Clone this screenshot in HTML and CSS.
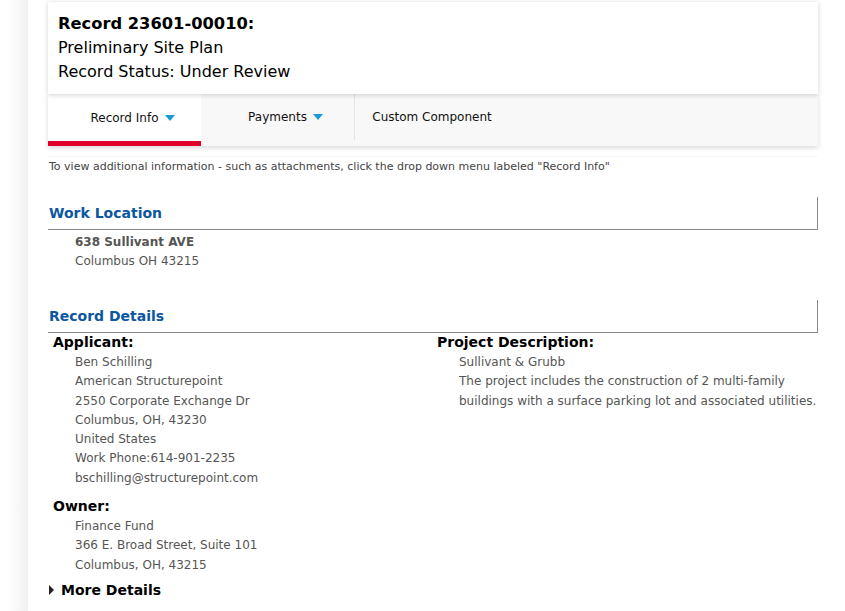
FILE: index.html
```html
<!DOCTYPE html>
<html>
<head>
  <title>Record 23601-00010</title>
  <meta charset="UTF-8">
  <link rel="stylesheet" href="styles.css">
</head>
<body>
  <div class="page">
    <div class="side-shade"></div>
    <div class="main">
      <div class="record-header">
        <div class="record-title">Record 23601-00010:</div>
        <div class="record-line">Preliminary Site Plan</div>
        <div class="record-line">Record Status: Under Review</div>
      </div>
      <div class="tabs">
        <div class="tab active">Record Info <span class="caret"></span></div>
        <div class="tab">Payments <span class="caret"></span></div>
        <div class="tab">Custom Component</div>
      </div>

      <div class="content">
        <div class="hint">To view additional information - such as attachments, click the drop down menu labeled "Record Info"</div>

        <div class="section-title">Work Location</div>
        <div class="address">
          <div class="strong">638 Sullivant AVE</div>
          <div>Columbus OH 43215</div>
        </div>

        <div class="section-title second">Record Details</div>
        <div class="details">
          <div class="col">
            <div class="label">Applicant:</div>
            <div class="values">
              <div>Ben Schilling</div>
              <div>American Structurepoint</div>
              <div>2550 Corporate Exchange Dr</div>
              <div>Columbus, OH, 43230</div>
              <div>United States</div>
              <div>Work Phone:614-901-2235</div>
              <div>bschilling@structurepoint.com</div>
            </div>
            <div class="label owner">Owner:</div>
            <div class="values">
              <div>Finance Fund</div>
              <div>366 E. Broad Street, Suite 101</div>
              <div>Columbus, OH, 43215</div>
            </div>
          </div>
          <div class="col">
            <div class="label">Project Description:</div>
            <div class="values">
              <div>Sullivant &amp; Grubb</div>
              <div>The project includes the construction of 2 multi-family buildings with a surface parking lot and associated utilities.</div>
            </div>
          </div>
        </div>

        <div class="more"><span class="arrow"></span>More Details</div>
      </div>
    </div>
  </div>
</body>
</html>
```

FILE: styles.css
```css
body {
  margin: 0;
  background: #fff;
  font-family: "DejaVu Sans", Verdana, sans-serif;
  color: #555;
}

.page {
  display: flex;
  min-height: 611px;
}

.side-shade {
  width: 20px;
  margin-left: 8px;
  background: linear-gradient(to right, #fff, #f1f1f1);
  flex-shrink: 0;
}

.main {
  width: 770px;
  padding: 2px 0 0 20px;
}

.record-header {
  background: #fff;
  padding: 10px 10px 10px;
  box-shadow: 0 1px 5px rgba(0,0,0,0.18);
  position: relative;
  z-index: 1;
  color: #000;
}

.record-title {
  font-size: 16.3px;
  font-weight: bold;
  line-height: 24px;
}

.record-line {
  font-size: 16px;
  line-height: 24px;
}

.tabs {
  display: flex;
  background: #f8f8f8;
  height: 52px;
  box-shadow: 0 2px 5px rgba(0,0,0,0.15);
}

.tab {
  width: 154px;
  display: flex;
  align-items: center;
  justify-content: center;
  font-size: 12px;
  color: #111;
  border-right: 1px solid #e2e2e2;
  box-sizing: border-box;
  height: 46px;
}

.tab:last-child {
  border-right: none;
}

.tab.active {
  width: 153px;
  background: #fff;
  height: 52px;
  border-bottom: 5px solid #e3002a;
  border-right: none;
  padding-top: 1px;
}

.caret {
  display: inline-block;
  width: 0;
  height: 0;
  margin-left: 6px;
  margin-right: -16px;
  border-left: 5px solid transparent;
  border-right: 5px solid transparent;
  border-top: 6px solid #1a98d8;
}

.content {
  margin-top: 10px;
  border-top: 1px solid #f6f6f6;
}

.hint {
  font-size: 11px;
  color: #444;
  padding: 3px 1px 0;
  line-height: 14px;
}

.section-title {
  margin-top: 23px;
  padding: 8px 1px 8px;
  font-size: 14px;
  font-weight: bold;
  color: #0b56a1;
  border-right: 1px solid #888;
  border-bottom: 1px solid #888;
}

.section-title.second {
  margin-top: 29px;
}

.address {
  padding: 3px 0 0 27px;
  font-size: 12px;
  line-height: 19px;
}

.strong {
  font-weight: bold;
}

.details {
  display: flex;
}

.col {
  width: 384px;
}

.col + .col {
  width: 386px;
}

.label {
  padding-left: 5px;
  font-size: 14px;
  font-weight: bold;
  color: #000;
  line-height: 18px;
}

.label.owner {
  margin-top: 9px;
}

.values {
  padding: 2px 0 0 27px;
  font-size: 12px;
  line-height: 19.3px;
}

.more {
  margin-top: 7px;
  font-size: 14px;
  font-weight: bold;
  color: #000;
  display: flex;
  align-items: center;
  padding-left: 1px;
}

.arrow {
  display: inline-block;
  width: 0;
  height: 0;
  border-top: 5px solid transparent;
  border-bottom: 5px solid transparent;
  border-left: 5px solid #222;
  margin-right: 7px;
}
```
